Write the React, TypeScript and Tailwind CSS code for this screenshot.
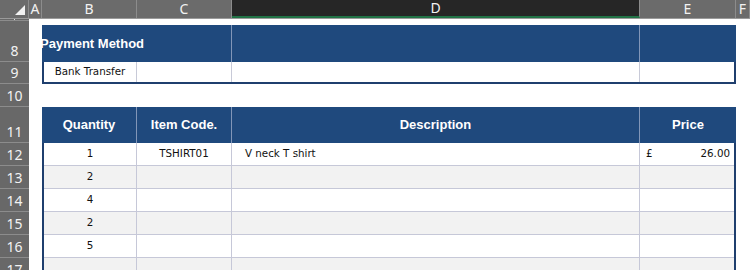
import React from 'react';

const font = { fontFamily: '"DejaVu Sans", Verdana, sans-serif' };
const headFont = { fontFamily: '"Liberation Sans", Arial, sans-serif' };
const uiFont = { fontFamily: '"Noto Sans", "Open Sans", sans-serif' };

// row header + column A prefix, then table cells, then column F
function SheetRow({
  num,
  h,
  children,
}: {
  num?: string;
  h: string;
  children?: React.ReactNode;
}) {
  return (
    <div className={`flex ${h} shrink-0`}>
      <div
        className="w-[29px] shrink-0 bg-[#686868] border-b border-[#8c8c8c] flex items-end justify-center pb-[2px] text-[#f2f2f2] text-[14px] leading-[16px] overflow-hidden"
        style={uiFont}
      >
        {num}
      </div>
      <div className="w-[13px] shrink-0 bg-white" />
      {children}
      <div className="flex-1 bg-white" />
    </div>
  );
}

const colHeads = [
  { l: 'A', w: 'w-[13px]' },
  { l: 'B', w: 'w-[95px]' },
  { l: 'C', w: 'w-[95px]' },
  { l: 'D', w: 'w-[408px]', sel: true },
  { l: 'E', w: 'w-[96px]' },
  { l: 'F', w: 'flex-1' },
];

const items = [
  { qty: '1', code: 'TSHIRT01', desc: 'V neck T shirt', price: '26.00' },
  { qty: '2' },
  { qty: '4' },
  { qty: '2' },
  { qty: '5' },
  { qty: '' },
];

export default function App() {
  return (
    <div className="w-[750px] h-[270px] overflow-hidden bg-white flex flex-col" style={font}>
      {/* column letters */}
      <div className="flex h-[19px] shrink-0 border-b border-[#9a9a9a]">
        <div className="w-[29px] shrink-0 bg-[#6b6b6b] border-r border-[#8c8c8c] flex items-end justify-end pr-[3px] pb-[3px]">
          <svg width="10" height="10" viewBox="0 0 10 10">
            <polygon points="10,0 10,10 0,10" fill="#f2f2f2" />
          </svg>
        </div>
        {colHeads.map((c) => (
          <div
            key={c.l}
            className={`${c.w} shrink-0 flex items-center justify-center text-[14px] leading-[16px] border-r ${
              c.sel
                ? 'bg-[#262626] text-[#f2f2f2] border-[#8c8c8c] border-b-2 border-b-[#217346]'
                : 'bg-[#6b6b6b] text-[#f2f2f2] border-[#8c8c8c]'
            }`}
            style={uiFont}
          >
            {c.l}
          </div>
        ))}
      </div>

      {/* row 7 sliver: only the foot of its number shows */}
      <div className="flex h-[2px] shrink-0">
        <div className="w-[29px] shrink-0 bg-[#686868] border-b border-[#8c8c8c] flex justify-center">
          <div className="w-px h-px bg-[#e0e0e0]" />
        </div>
        <div className="flex-1 bg-white" />
      </div>

      {/* row 8: payment header */}
      <SheetRow num="8" h="h-[41px]">
        <div className="w-[694px] shrink-0 border-t-4 border-white flex">
          <div className="flex w-full bg-[#1f497d] text-white font-bold text-[13px]" style={headFont}>
            <div className="w-[190px] shrink-0 overflow-hidden flex items-center border-r border-[#8196b8]">
              <span className="whitespace-nowrap -ml-[2px]">Payment Method</span>
            </div>
            <div className="w-[408px] shrink-0 border-r border-[#8196b8]" />
            <div className="flex-1" />
          </div>
        </div>
      </SheetRow>

      {/* row 9 */}
      <SheetRow num="9" h="h-[22px]">
        <div className="w-[694px] shrink-0 flex border-l-2 border-r-2 border-b-2 border-[#1f3f6e] text-[10.3px] text-[#111]">
          <div className="w-[93px] shrink-0 flex items-center justify-center border-r border-[#c8cad8]">Bank Transfer</div>
          <div className="w-[95px] shrink-0 border-r border-[#c8cad8]" />
          <div className="w-[408px] shrink-0 border-r border-[#c8cad8]" />
          <div className="flex-1" />
        </div>
      </SheetRow>

      {/* row 10 */}
      <SheetRow num="10" h="h-[23px]" />

      {/* row 11: items header */}
      <SheetRow num="11" h="h-[36px]">
        <div className="w-[694px] shrink-0 flex bg-[#1f497d] text-white font-bold text-[13px]" style={headFont}>
          <div className="w-[95px] shrink-0 flex items-center justify-center border-r border-[#8196b8]">Quantity</div>
          <div className="w-[95px] shrink-0 flex items-center justify-center border-r border-[#8196b8]">Item Code.</div>
          <div className="w-[408px] shrink-0 flex items-center justify-center border-r border-[#8196b8]">Description</div>
          <div className="flex-1 flex items-center justify-center">Price</div>
        </div>
      </SheetRow>

      {items.map((it, i) => (
        <SheetRow key={i} num={String(12 + i)} h="h-[23px]">
          <div
            className={`w-[694px] shrink-0 flex border-l-2 border-r-2 border-[#1f3f6e] text-[10.3px] text-[#111] ${
              i % 2 === 1 ? 'bg-[#f2f2f2]' : 'bg-white'
            }`}
          >
            <div className="w-[93px] shrink-0 flex items-center justify-center border-r border-b border-[#c6c8d8]">{it.qty}</div>
            <div className="w-[95px] shrink-0 flex items-center justify-center border-r border-b border-[#c6c8d8]">{it.code}</div>
            <div className="w-[408px] shrink-0 flex items-center pl-[13px] border-r border-b border-[#c6c8d8]">{it.desc}</div>
            <div className="flex-1 flex items-center justify-between pl-[6px] pr-[4px] border-b border-[#c6c8d8]">
              {it.price ? (
                <>
                  <span>£</span>
                  <span>{it.price}</span>
                </>
              ) : null}
            </div>
          </div>
        </SheetRow>
      ))}
    </div>
  );
}
